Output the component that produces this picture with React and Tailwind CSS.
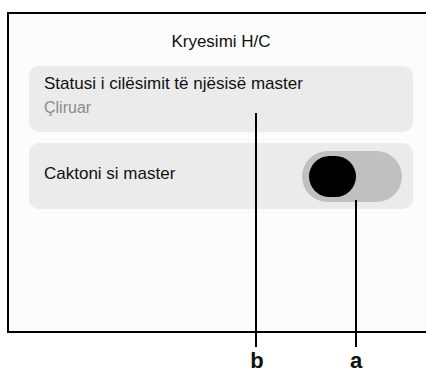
import React from "react";

// Settings screen: master unit status + toggle, with callout labels
export default function App() {
  return (
    <div className="relative w-[426px] h-[371px] bg-white overflow-hidden font-['Liberation_Sans',Arial,sans-serif] text-[#111]">
      {/* Device frame */}
      <div className="ml-[7px] mt-[12px] h-[321px] border-l-2 border-y-2 border-black bg-[#fcfcfc] pl-[20px] pr-[13px] pt-[18px]">
        <h1 className="text-center text-[17px] leading-[20px] mb-[14px]">Kryesimi H/C</h1>

        {/* Status card */}
        <div className="h-[66px] rounded-[10px] bg-[#ebebeb] px-[15px] pt-[8px]">
          <p className="text-[17px] leading-[20px]">Statusi i cilësimit të njësisë master</p>
          <p className="mt-[4px] text-[16px] leading-[20px] text-[#8a8a8a]">Çliruar</p>
        </div>

        {/* Toggle card */}
        <div className="mt-[11px] h-[66px] rounded-[10px] bg-[#ebebeb] pl-[15px] pr-[11px] flex items-center justify-between">
          <span className="text-[17px] leading-[20px] pb-[5px]">Caktoni si master</span>
          <div className="w-[100px] h-[51px] rounded-full bg-[#c0c0c0] flex items-center pl-[7px]">
            <div className="w-[47px] h-[41px] rounded-full bg-black" />
          </div>
        </div>
      </div>

      {/* Callout lines and labels */}
      <div className="absolute left-[255px] top-[113px] w-[2px] h-[234px] bg-black" />
      <div className="absolute left-[355px] top-[200px] w-[2px] h-[147px] bg-black" />
      <span className="absolute left-[249px] top-[350px] w-[16px] text-center text-[22px] leading-[22px] font-bold">b</span>
      <span className="absolute left-[348px] top-[350px] w-[16px] text-center text-[22px] leading-[22px] font-bold">a</span>
    </div>
  );
}
